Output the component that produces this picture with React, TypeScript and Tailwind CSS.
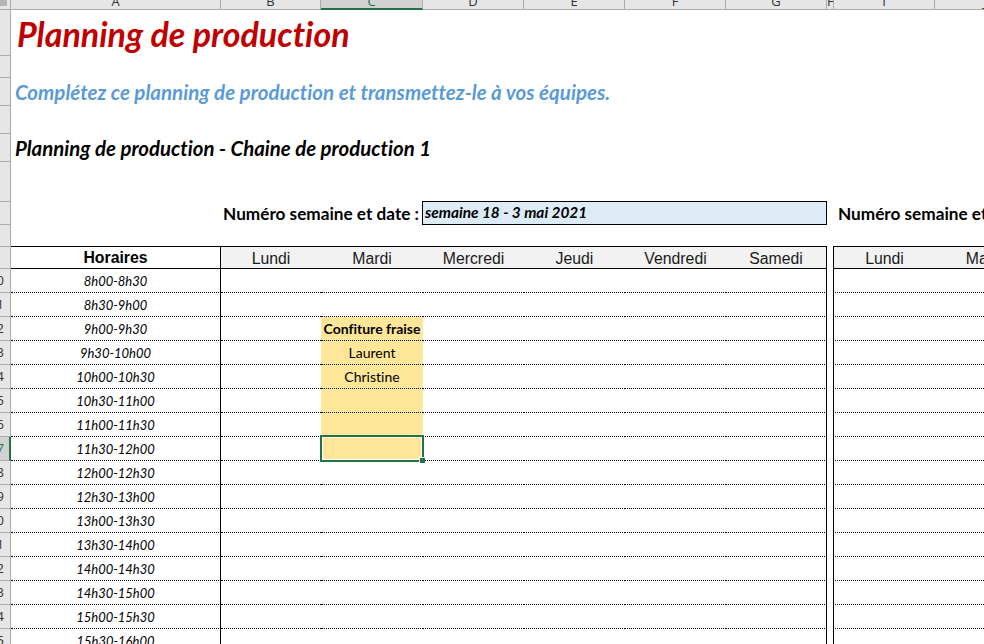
const dataRows = [
  { n: 10, time: "8h00-8h30" },
  { n: 11, time: "8h30-9h00" },
  { n: 12, time: "9h00-9h30", fill: true, text: "Confiture fraise", bold: true },
  { n: 13, time: "9h30-10h00", fill: true, text: "Laurent" },
  { n: 14, time: "10h00-10h30", fill: true, text: "Christine" },
  { n: 15, time: "10h30-11h00", fill: true },
  { n: 16, time: "11h00-11h30", fill: true },
  { n: 17, time: "11h30-12h00", fill: true, selected: true },
  { n: 18, time: "12h00-12h30" },
  { n: 19, time: "12h30-13h00" },
  { n: 20, time: "13h00-13h30" },
  { n: 21, time: "13h30-14h00" },
  { n: 22, time: "14h00-14h30" },
  { n: 23, time: "14h30-15h00" },
  { n: 24, time: "15h00-15h30" },
  { n: 25, time: "15h30-16h00" },
];

const colHeaders = [
  { label: "A", width: "w-[210px]" },
  { label: "B", width: "w-[100px]" },
  { label: "C", width: "w-[102px]", selected: true },
  { label: "D", width: "w-[101px]" },
  { label: "E", width: "w-[101px]" },
  { label: "F", width: "w-[101px]" },
  { label: "G", width: "w-[101px]" },
  { label: "H", width: "w-[7px]" },
  { label: "I", width: "w-[101px]" },
  { label: "J", width: "w-[101px]" },
];

const RowHeader = ({ n, selected }: { n?: number; selected?: boolean }) => (
  <div
    className={`w-[11px] shrink-0 overflow-hidden flex items-center justify-end whitespace-nowrap border-b border-b-[#ababab] font-['Open_Sans',sans-serif] text-[13px] ${
      selected
        ? "bg-[#d2d2d2] border-r-2 border-r-[#217346] pr-[5px] text-[#217346]"
        : "bg-[#e6e6e6] border-r border-r-[#ababab] pr-[6px] text-[#333333]"
    }`}
  >
    {n}
  </div>
);

const DayCells = ({ days }: { days: string[] }) => (
  <>
    {days.map((day, i) => (
      <div
        key={day}
        className={`shrink-0 flex items-center justify-center bg-[#f2f2f2] border-b border-black text-[#1a1a1a] pt-[2px] ${
          ["w-[100px]", "w-[102px]", "w-[101px]", "w-[101px]", "w-[101px]", "w-[101px] border-r border-r-black"][i]
        }`}
      >
        {day}
      </div>
    ))}
  </>
);

const App = () => {
  return (
    <div className="w-[984px] h-[644px] overflow-hidden bg-white text-black font-['Lato',sans-serif] [font-variant-ligatures:none]">
      {/* Column letters, cut by the top of the window */}
      <div className="flex h-[10px] overflow-hidden">
        <div className="relative w-[11px] shrink-0 bg-[#e6e6e6] border-r border-b border-[#ababab]">
          <div className="w-[7px] h-[6px] bg-[#b4b4b4]" />
        </div>
        {colHeaders.map((col) => (
          <div
            key={col.label}
            className={`${col.width} shrink-0 h-[10px] overflow-hidden text-center font-['Open_Sans',sans-serif] text-[13px] leading-[14px] border-r border-r-[#ababab] ${
              col.selected
                ? "bg-[#d2d2d2] border-b-2 border-b-[#217346] text-[#217346]"
                : "bg-[#e6e6e6] border-b border-b-[#ababab] text-[#333333]"
            }`}
          >
            <div className="-mt-[6px]">{col.label}</div>
          </div>
        ))}
      </div>

      {/* Rows 1 to 6 */}
      <div className="flex h-[46px]">
        <RowHeader />
        <div className="pl-[6px] flex items-center whitespace-nowrap font-bold italic text-[34px] text-[#c00000]">
          Planning de production
        </div>
      </div>
      <div className="flex h-[22px]">
        <RowHeader />
      </div>
      <div className="flex h-[28px]">
        <RowHeader />
        <div className="pl-[4px] flex items-center whitespace-nowrap font-bold italic text-[20.5px] text-[#5b9bd5]">
          Complétez ce planning de production et transmettez-le à vos équipes.
        </div>
      </div>
      <div className="flex h-[28px]">
        <RowHeader />
      </div>
      <div className="flex h-[28px]">
        <RowHeader />
        <div className="pl-[4px] flex items-center whitespace-nowrap font-bold italic text-[20.4px]">
          Planning de production - Chaine de production 1
        </div>
      </div>
      <div className="flex h-[40px]">
        <RowHeader />
      </div>

      {/* Week and date */}
      <div className="flex h-[23px] whitespace-nowrap">
        <RowHeader />
        <div className="w-[411px] shrink-0 pr-[3px] flex items-center justify-end font-bold text-[17.2px]">
          Numéro semaine et date :
        </div>
        <div className="w-[405px] shrink-0 h-[24px] -mt-px pl-[2px] flex items-center bg-[#ddebf7] border border-black font-bold italic text-[15.4px]">
          semaine 18 - 3 mai 2021
        </div>
        <div className="pl-[11px] flex items-center font-bold text-[17.2px]">Numéro semaine et date :</div>
      </div>

      {/* Blank row with the top line of both tables */}
      <div className="flex h-[22px]">
        <RowHeader />
        <div className="w-[816px] shrink-0 border-b border-black" />
        <div className="w-[6px] shrink-0" />
        <div className="w-[151px] shrink-0 border-b border-black" />
      </div>

      {/* Day headers */}
      <div className="flex h-[22px] font-['Liberation_Sans',sans-serif] text-[15.8px]">
        <RowHeader />
        <div className="w-[210px] shrink-0 flex items-center justify-center border-b border-r border-black font-bold">
          Horaires
        </div>
        <DayCells days={["Lundi", "Mardi", "Mercredi", "Jeudi", "Vendredi", "Samedi"]} />
        <div className="w-[6px] shrink-0" />
        <div className="w-[102px] shrink-0 flex items-center justify-center bg-[#f2f2f2] border-b border-l border-black text-[#1a1a1a] pt-[2px]">
          Lundi
        </div>
        <div className="w-[101px] shrink-0 flex items-center justify-center bg-[#f2f2f2] border-b border-black text-[#1a1a1a] pt-[2px]">
          Mardi
        </div>
      </div>

      {/* Half hour rows */}
      {dataRows.map((row) => (
        <div key={row.n} className="flex h-[24px] text-[14px]">
          <RowHeader n={row.n} selected={row.selected} />
          <div className="w-[210px] shrink-0 flex items-center justify-center pt-[2px] italic text-[13px] border-b border-dotted border-b-black border-r border-r-black [border-right-style:solid]">
            {row.time}
          </div>
          <div className="w-[100px] shrink-0 border-b border-dotted border-black" />
          <div
            className={`relative w-[102px] shrink-0 flex items-center justify-center whitespace-nowrap border-b border-dotted border-black ${
              row.fill ? "bg-[#ffe699]" : ""
            } ${row.bold ? "font-bold" : ""}`}
          >
            {row.text}
            {row.selected && (
              <div className="absolute z-10 -top-[2px] -bottom-[2px] -left-[1px] -right-[1px] border-2 border-solid border-[#217346] shadow-[inset_0_0_0_1px_#ffffff]">
                <div className="absolute -right-[3px] -bottom-[3px] w-[6px] h-[6px] bg-[#217346] border-l border-t border-solid border-white" />
              </div>
            )}
          </div>
          <div className="w-[101px] shrink-0 border-b border-dotted border-black" />
          <div className="w-[101px] shrink-0 border-b border-dotted border-black" />
          <div className="w-[101px] shrink-0 border-b border-dotted border-black" />
          <div className="w-[101px] shrink-0 border-b border-dotted border-b-black border-r border-r-black [border-right-style:solid]" />
          <div className="w-[6px] shrink-0" />
          <div className="w-[151px] shrink-0 border-b border-dotted border-b-black border-l border-l-black [border-left-style:solid]" />
        </div>
      ))}
    </div>
  );
};

export default App;
